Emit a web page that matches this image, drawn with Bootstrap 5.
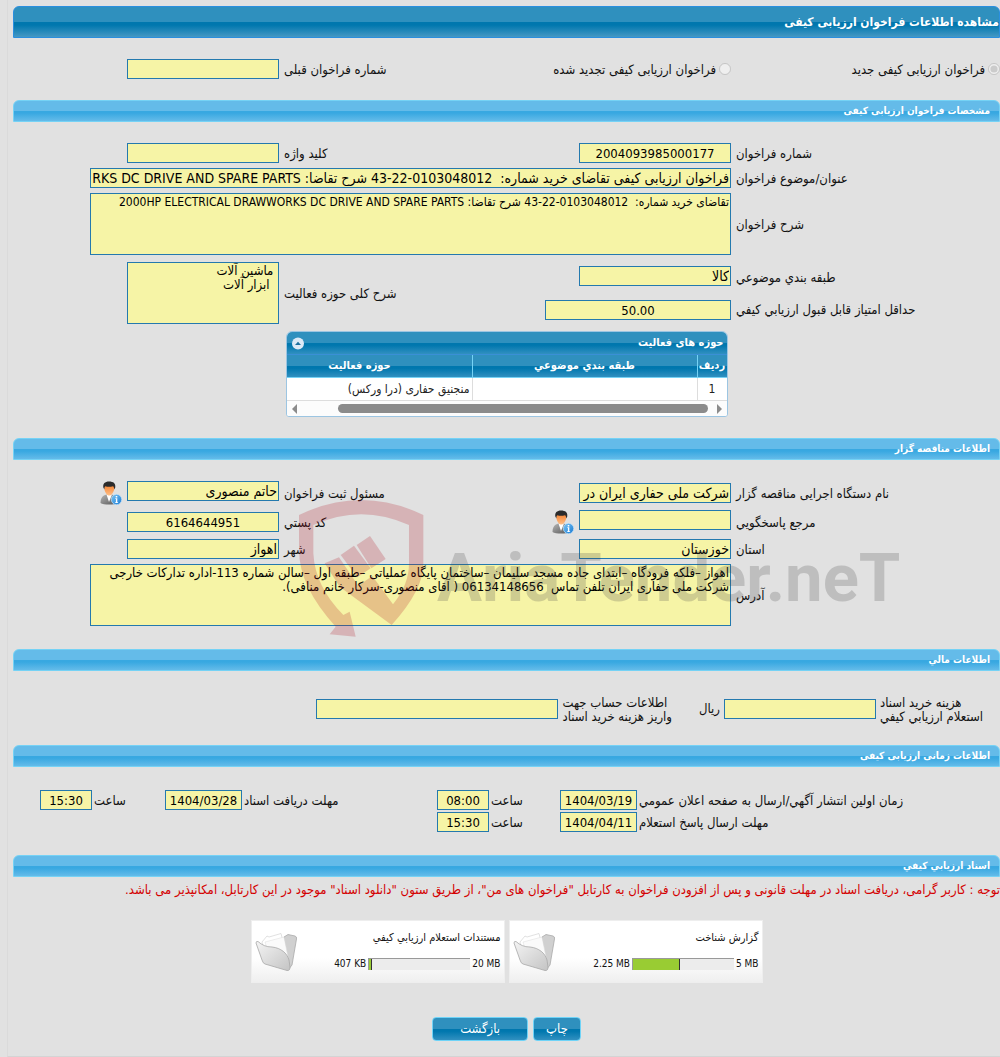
<!DOCTYPE html>
<html lang="fa" dir="rtl">
<head>
<meta charset="utf-8">
<meta name="viewport" content="width=device-width, initial-scale=1">
<title>مشاهده اطلاعات فراخوان ارزیابی کیفی</title>
<link href="https://cdn.jsdelivr.net/npm/bootstrap@5.3.0/dist/css/bootstrap.min.css" rel="stylesheet">
<style>
:root{--ui:Tahoma,"DejaVu Sans Condensed","DejaVu Sans",sans-serif}
body{background:#e1e1e1;font-family:var(--ui);font-size:13px;line-height:14px;color:#111}
label{padding-top:2px}
.shell{margin-left:7px;border-left:1px solid #dadada;border-bottom:1px solid #d4d4d4;padding:6px 0 15px 5px}
.title-bar{height:32px;border:1px solid #2a8fdf;border-radius:6px 6px 0 0;color:#fff;font-size:12px;font-weight:bold;background:linear-gradient(#2f90be 0 50%,#0077ae 50% 60%,#4598c4)}
.sec-bar{height:22px;border:1px solid #75d2f5;border-radius:6px 6px 0 0;color:#fff;font-size:10px;font-weight:bold;padding:0 9px;margin:0;background:linear-gradient(#64bbe9 0 50%,#38a8e1 50% 60%,#64bbe9)}
.form-grid{display:grid;grid-template-columns:minmax(0,264fr) minmax(0,292fr) minmax(0,150fr) minmax(0,266fr);column-gap:5px;align-items:center}
.form-grid label{text-align:left}
.form-grid .span-all{grid-column:2 / 5}
.fld{height:20px;width:152px;border:1px solid #2479ae;background:#f6f4a6;color:#000;border-radius:0;padding:0 1px;font-size:14px;line-height:18px;font-family:var(--ui);display:block}
.fld.text-center{font-size:13px}
textarea.fld{height:62px;font-size:13px;line-height:14px;resize:none;overflow:hidden;padding:1px}
textarea.fld.dense{font-size:12px}
.fld.long{width:641px;max-width:100%}
.wide{width:186px}
.acct{width:242px}
.day{width:77px}
.hour{width:52px}
.pick input{width:12px;height:12px;margin:0;flex:none}
.pick{gap:3px}
.rows-a{padding:21px 0;row-gap:5px}
.rows-spec{padding:21px 0 7px;row-gap:5px}
.rows-b{padding:21px 0 23px;row-gap:5px}
.row-tall{margin-top:2px}
.col-rows{height:54px}
.col-rows.names{padding:3px 0}
.ico-btn{border:0;background:none;padding:0;width:24px;height:24px;flex:none}
.mark-layer{position:absolute;left:28%;top:30px;pointer-events:none;opacity:.22}
.grid-wrap{padding-bottom:21px}
.grid-box{width:442px;font-size:11px;border:1px solid #9cc5e2;border-radius:6px 6px 3px 3px;overflow:hidden;background:#fff}
.grid-cap{height:23px;padding:0 3px;color:#fff;font-weight:bold;border-bottom:1px solid #3a8fd6;background:linear-gradient(#2f90be 0 50%,#0077ae 50% 60%,#3190c0)}
.grid-table{width:480px;table-layout:fixed;border-collapse:separate;border-spacing:0;margin:0}
.grid-table th{height:23px;padding:0;color:#fff;text-align:center;border-bottom:1px solid #75d2f5;border-left:1px solid #75d2f5;background:linear-gradient(#2f90be 0 50%,#0077ae 50% 60%,#3190c0)}
.grid-table td{height:23px;padding:0 2px;font-size:12px;color:#222;border-left:1px solid #ddd;border-bottom:1px solid #ddd}
.scroll-strip{height:15px;padding:0 5px;background:#fcfcfc}
.thumb{height:9px;width:370px;border-radius:5px;background:#8b8b8b}
.cost-grid{display:grid;grid-template-columns:minmax(0,120fr) minmax(0,208fr) minmax(0,659fr);padding:23px 0 21px}
.cost-grid .fld{flex:none}
.time-grid{display:grid;grid-template-columns:minmax(0,361fr) minmax(0,100fr) minmax(0,44fr) minmax(0,145fr) minmax(0,98fr) minmax(0,100fr) minmax(0,46fr) minmax(0,79fr);column-gap:2px;row-gap:2px;align-items:center;padding:23px 0}
.time-grid label{text-align:left}
.note{color:#d40000;padding:6px 0 0;margin:0 0 23px}
.doc{width:254px;height:63px;border:1px solid #eee;background:linear-gradient(#fff 60%,#efefef);padding:0 3px;font-size:11px}
.doc-body{padding-top:10px}
.sizes{font-size:10px;gap:2px;margin-top:12px}
.meter{width:102px;height:12px;background:#ececec;border-top:1px solid #999;border-left:1px solid #999}
.meter div{height:100%;background:#9c3;border-right:1px solid #333}
.acts{margin-top:34px;gap:5px}
.act{height:24px;border:1px solid #6fd3f7;border-radius:4px;color:#fff;line-height:14px;padding:0 12px;background:linear-gradient(#2f90be 0 50%,#0077ae 50% 60%,#3190c0)}
.act.back{padding:0 27px}
</style>
<script src="https://cdn.jsdelivr.net/npm/bootstrap@5.3.0/dist/js/bootstrap.bundle.min.js"></script>
</head>
<body>
<svg width="0" height="0" class="position-absolute" aria-hidden="true">
<defs>
<linearGradient id="gSuit" x1="0" y1="0" x2="1" y2="1"><stop offset="0" stop-color="#b5b5b5"/><stop offset="1" stop-color="#555"/></linearGradient>
<linearGradient id="gFace" x1="0" y1="0" x2="0" y2="1"><stop offset="0" stop-color="#f57f2c"/><stop offset="1" stop-color="#ffc089"/></linearGradient>
<linearGradient id="gInfo" x1="0" y1="0" x2="1" y2="1"><stop offset="0" stop-color="#7cc6f5"/><stop offset="1" stop-color="#1779d2"/></linearGradient>
<linearGradient id="gFold" x1="0" y1="0" x2="1" y2="1"><stop offset="0" stop-color="#f4f4f4"/><stop offset="1" stop-color="#c4c4c4"/></linearGradient>
</defs>
<symbol id="person" viewBox="0 0 24 24">
<path d="M1.500 22c0-5 2-7.500 6-8.500h5c4 1 6 3.500 6 8.500-3 2-14 2-17 0z" fill="url(#gSuit)"/>
<path d="M7.500 13.500 10 21l3-7.500z" fill="#fff"/>
<path d="M5.300 5.500C5 11 8 14.600 10.200 14.600S15.600 11 15.300 5.500C13 3 8 3 5.300 5.500z" fill="url(#gFace)"/>
<path d="M4.400 6.800C3.500 2.500 6 .4 10 .4c4.500 0 7 2 6.200 6.400l-1 1.700c0-2-.6-3-1.300-3.300-2.600.8-5.500.7-7.500 0C5.500 5.700 5.400 7 5.400 8.500z" fill="#2b2b2b"/>
<circle cx="17.500" cy="18.500" r="5.200" fill="url(#gInfo)" stroke="#cfe8fa" stroke-width=".6"/>
<path d="M16.300 17.300h2v4h.8v.8h-3v-.8h.8v-3.200h-.6zM16.700 15h1.600v1.500h-1.600z" fill="#fff"/>
</symbol>
<symbol id="folder" viewBox="0 0 42 40">
<path d="M29 5 33 2.500l7 1.500q2 .5 1.500 3L37 33l-4 5z" fill="#d0d0d0" stroke="#aaa" stroke-width=".8"/>
<path d="M7 10 12 4l2 1L26 1.500 32 25 10 22z" fill="#fff" stroke="#ccc" stroke-width=".6"/>
<path d="M10 10 29 5l5 25-20-6z" fill="#fafafa" stroke="#ddd" stroke-width=".5"/>
<path d="M1 11q0-2 2-1.500C7 13 11 15 17 15c9 1 15 6 17 13l1 7q0 4-3 3.500L10 32q-2-.5-3-4z" fill="url(#gFold)" stroke="#a8a8a8" stroke-width=".8"/>
</symbol>
</svg>

<main class="shell">
<h1 class="title-bar d-flex align-items-center m-0">مشاهده اطلاعات فراخوان ارزیابی کیفی</h1>

<div class="form-grid rows-a">
<div class="pick d-flex align-items-center"><input type="radio" name="kind" id="k1" checked disabled><label for="k1">فراخوان ارزیابی کیفی جدید</label></div>
<div class="pick d-flex align-items-center"><input type="radio" name="kind" id="k2" disabled><label for="k2">فراخوان ارزیابی کیفی تجدید شده</label></div>
<label for="prev">شماره فراخوان قبلی</label><input class="fld" id="prev" readonly>
</div>

<section>
<h2 class="sec-bar d-flex align-items-center">مشخصات فراخوان ارزیابی کیفی</h2>
<div class="form-grid rows-spec">
<label for="num">شماره فراخوان</label><input class="fld text-center" id="num" value="2004093985000177" readonly>
<label for="key">کلید واژه</label><input class="fld" id="key" readonly>
<label for="subj">عنوان/موضوع فراخوان</label>
<div class="span-all"><input class="fld long" id="subj" value="فراخوان ارزیابی کیفی تقاضای خرید شماره:  0103048012-22-43 شرح تقاضا: 2000HP ELECTRICAL DRAWWORKS DC DRIVE AND SPARE PARTS" readonly></div>
<label for="desc">شرح فراخوان</label>
<div class="span-all"><textarea class="fld long dense" id="desc" readonly>تقاضای خرید شماره:  0103048012-22-43 شرح تقاضا: 2000HP ELECTRICAL DRAWWORKS DC DRIVE AND SPARE PARTS</textarea></div>
<div class="row-tall col-rows names d-flex flex-column justify-content-between">
<label for="cat">طبقه بندي موضوعي</label><label for="minp">حداقل امتياز قابل قبول ارزيابي کيفي</label></div>
<div class="row-tall col-rows d-flex flex-column justify-content-between"><input class="fld" id="cat" value="کالا" readonly><input class="fld wide text-center" id="minp" value="50.00" readonly></div>
<label for="area" class="row-tall">شرح کلی حوزه فعالیت</label>
<textarea class="fld row-tall" id="area" readonly> ماشین آلات
  ابزار آلات</textarea>
</div>
<div class="grid-wrap d-flex justify-content-center">
<div class="grid-box">
<div class="grid-cap d-flex align-items-center justify-content-between"><span>حوزه های فعالیت</span>
<button class="border-0 bg-transparent p-0 d-flex" type="button" aria-label="بستن"><svg width="16" height="13" viewBox="0 0 16 13"><circle cx="8" cy="6.500" r="6" fill="#dce9f6"/><path d="M5 8 8 4.800 11 8z" fill="#1b6f9f"/></svg></button></div>
<div class="overflow-hidden">
<table class="grid-table">
<colgroup><col style="width:30px"><col style="width:225px"><col style="width:225px"></colgroup>
<thead><tr><th>رديف</th><th>طبقه بندي موضوعي</th><th>حوزه فعاليت</th></tr></thead>
<tbody><tr><td class="text-center">1</td><td></td><td>منجنیق حفاری (درا ورکس)</td></tr></tbody>
</table></div>
<div class="scroll-strip d-flex align-items-center">
<svg width="6" height="10" viewBox="0 0 6 10"><path d="M1 0v10l5-5z" fill="#8b8b8b"/></svg>
<div class="thumb mx-2"></div>
<svg class="me-auto" width="6" height="10" viewBox="0 0 6 10"><path d="M5 0v10L0 5z" fill="#8b8b8b"/></svg>
</div>
</div>
</div>
</section>

<section>
<h2 class="sec-bar d-flex align-items-center">اطلاعات مناقصه گزار</h2>
<div class="position-relative">
<div class="form-grid rows-b">
<label for="org">نام دستگاه اجرایی مناقصه گزار</label><input class="fld" id="org" value="شرکت ملی حفاری ایران در" readonly>
<label for="reg">مسئول ثبت فراخوان</label>
<div class="d-flex gap-1"><input class="fld" id="reg" value="حاتم منصوری" readonly><button class="ico-btn" type="button" aria-label="اطلاعات مسئول"><svg class="d-block" width="24" height="24"><use href="#person"/></svg></button></div>
<label for="ref">مرجع پاسخگويي</label>
<div class="d-flex gap-1"><input class="fld" id="ref" readonly><button class="ico-btn" type="button" aria-label="اطلاعات مرجع"><svg class="d-block" width="24" height="24"><use href="#person"/></svg></button></div>
<label for="zip">کد پستي</label><input class="fld text-center" id="zip" value="6164644951" readonly>
<label for="prov">استان</label><input class="fld" id="prov" value="خوزستان" readonly>
<label for="city">شهر</label><input class="fld" id="city" value="اهواز" readonly>
<label for="addr">آدرس</label>
<div class="span-all"><textarea class="fld long" id="addr" readonly>اهواز –فلکه فرودگاه –ابتدای جاده مسجد سلیمان –ساختمان پایگاه عملیاتی –طبقه اول –سالن شماره 113-اداره تدارکات خارجی
شرکت ملی حفاری ایران تلفن تماس  06134148656 ( آقای منصوری-سرکار خانم منافی).</textarea></div>
</div>
<svg class="mark-layer" width="630" height="155" viewBox="0 0 630 155" direction="ltr" aria-hidden="true">
<g transform="scale(.33333)" fill="#b01522">
<path d="M30 75Q217-15 403 75V222Q403 300 308 405L152 290 107 220 150 202 208 287 250 258 312 343Q360 285 360 220V105Q217 40 73 105V190Q78 290 163 375L182 365 200 440 122 433 140 410Q30 290 30 180z"/>
<path d="M155 195 195 167 245 235 205 262z"/><path d="M203 165 243 138 290 207 247 235z"/>
</g>
<text x="148" y="111" font-family="'Roboto','Liberation Sans',sans-serif" font-weight="bold" font-size="67" fill="#444">AriaTender.neT</text>
</svg>
</div>
</section>

<section>
<h2 class="sec-bar d-flex align-items-center">اطلاعات مالي</h2>
<div class="cost-grid">
<div class="d-flex justify-content-end"><label for="cost" class="text-nowrap text-start">هزينه خريد اسناد<br>استعلام ارزيابي کيفي</label></div>
<div class="d-flex align-items-center gap-1 px-1"><input class="fld" id="cost" readonly><span>ریال</span></div>
<div class="d-flex align-items-center gap-1"><label for="acct" class="text-start text-nowrap">اطلاعات حساب جهت<br>واریز هزینه خرید اسناد</label><input class="fld acct" id="acct" readonly></div>
</div>
</section>

<section>
<h2 class="sec-bar d-flex align-items-center">اطلاعات زمانی ارزیابی کیفی</h2>
<div class="time-grid">
<label for="d1">زمان اولين انتشار آگهي/ارسال به صفحه اعلان عمومي</label><input class="fld day text-center" id="d1" value="1404/03/19" readonly>
<label for="h1">ساعت</label><input class="fld hour text-center" id="h1" value="08:00" readonly>
<label for="d2">مهلت دریافت اسناد</label><input class="fld day text-center" id="d2" value="1404/03/28" readonly>
<label for="h2">ساعت</label><input class="fld hour text-center" id="h2" value="15:30" readonly>
<label for="d3">مهلت ارسال پاسخ استعلام</label><input class="fld day text-center" id="d3" value="1404/04/11" readonly>
<label for="h3">ساعت</label><input class="fld hour text-center" id="h3" value="15:30" readonly>
</div>
</section>

<section>
<h2 class="sec-bar d-flex align-items-center">اسناد ارزيابي کيفي</h2>
<p class="note">توجه : کاربر گرامی، دریافت اسناد در مهلت قانونی و پس از افزودن فراخوان به کارتابل "فراخوان های من"، از طریق ستون "دانلود اسناد" موجود در این کارتابل، امکانپذیر می باشد.</p>
<div class="d-flex flex-wrap justify-content-center gap-1">
<div class="doc d-flex justify-content-between align-items-center">
<div class="doc-body align-self-start"><div>گزارش شناخت</div>
<div class="sizes d-flex align-items-center"><span dir="ltr">5 MB</span><div class="meter" dir="ltr"><div style="width:47%"></div></div><span dir="ltr">2.25 MB</span></div></div>
<svg width="42" height="40" aria-hidden="true"><use href="#folder"/></svg>
</div>
<div class="doc d-flex justify-content-between align-items-center">
<div class="doc-body align-self-start"><div>مستندات استعلام ارزيابي کيفي</div>
<div class="sizes d-flex align-items-center"><span dir="ltr">20 MB</span><div class="meter" dir="ltr"><div style="width:3%"></div></div><span dir="ltr">407 KB</span></div></div>
<svg width="42" height="40" aria-hidden="true"><use href="#folder"/></svg>
</div>
</div>
<div class="acts d-flex justify-content-center">
<button class="act" type="button">چاپ</button>
<button class="act back" type="button">بازگشت</button>
</div>
</section>
</main>
</body>
</html>
